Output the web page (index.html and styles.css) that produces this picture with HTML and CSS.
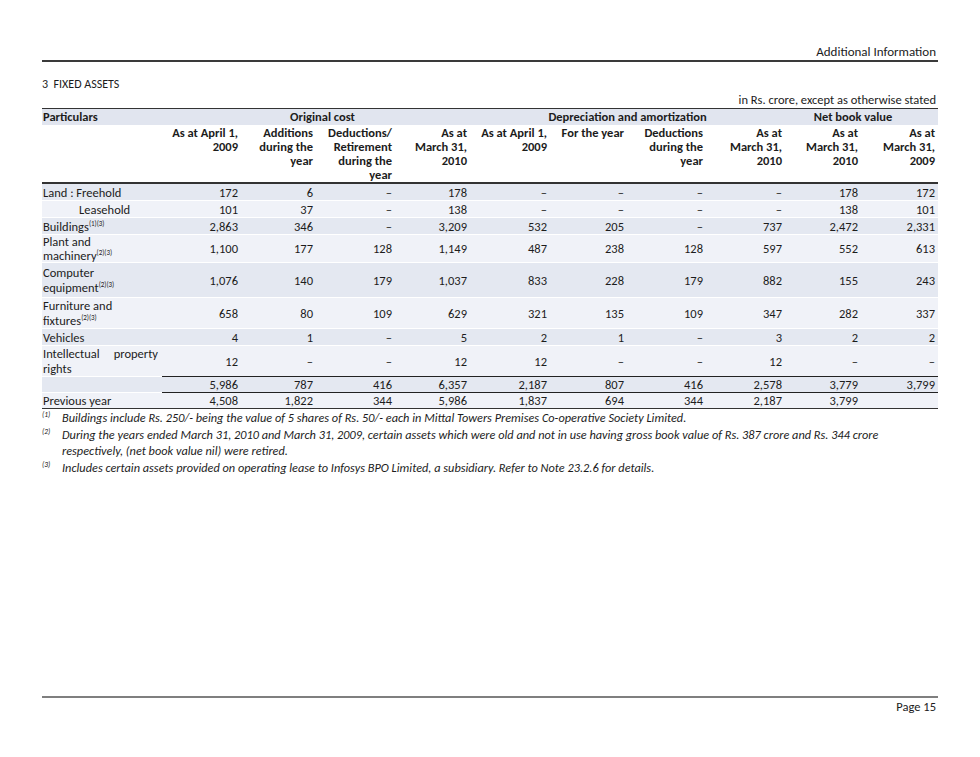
FILE: index.html
```
<!DOCTYPE html>
<html>
<head>
<meta charset="utf-8">
<link rel="stylesheet" href="styles.css">
</head>
<body>
<div class="page">
  <div class="running">Additional Information</div>
  <div class="sec">3&nbsp;&nbsp;FIXED ASSETS</div>
  <div class="unit">in Rs. crore, except as otherwise stated</div>
  <table class="fa">
    <colgroup>
      <col class="c-p"><col class="c-a"><col class="c-b"><col class="c-a"><col class="c-b"><col class="c-c"><col class="c-d"><col class="c-a"><col class="c-a"><col class="c-e"><col class="c-d">
    </colgroup>
    <thead>
      <tr class="h1">
        <th class="left">Particulars</th>
        <th colspan="4" class="grp g-oc">Original cost</th>
        <th colspan="4" class="grp">Depreciation and amortization</th>
        <th colspan="2" class="grp g-nb">Net book value</th>
      </tr>
      <tr class="h2">
        <th></th>
        <th>As at April 1,<br>2009</th>
        <th>Additions<br>during the<br>year</th>
        <th>Deductions/<br>Retirement<br>during the<br>year</th>
        <th>As at<br>March 31,<br>2010</th>
        <th>As at April 1,<br>2009</th>
        <th>For the year</th>
        <th>Deductions<br>during the<br>year</th>
        <th>As at<br>March 31,<br>2010</th>
        <th>As at<br>March 31,<br>2010</th>
        <th>As at<br>March 31,<br>2009</th>
      </tr>
    </thead>
    <tbody>
      <tr class="dk r1"><td class="left">Land : Freehold</td><td>172</td><td>6</td><td>–</td><td>178</td><td>–</td><td>–</td><td>–</td><td>–</td><td>178</td><td>172</td></tr>
      <tr class="lt r1"><td class="left ind">Leasehold</td><td>101</td><td>37</td><td>–</td><td>138</td><td>–</td><td>–</td><td>–</td><td>–</td><td>138</td><td>101</td></tr>
      <tr class="dk r1"><td class="left">Buildings<sup>(1)(3)</sup></td><td>2,863</td><td>346</td><td>–</td><td>3,209</td><td>532</td><td>205</td><td>–</td><td>737</td><td>2,472</td><td>2,331</td></tr>
      <tr class="lt r-plant"><td class="left two">Plant and<br>machinery<sup>(2)(3)</sup></td><td>1,100</td><td>177</td><td>128</td><td>1,149</td><td>487</td><td>238</td><td>128</td><td>597</td><td>552</td><td>613</td></tr>
      <tr class="dk r-comp"><td class="left two">Computer<br>equipment<sup>(2)(3)</sup></td><td>1,076</td><td>140</td><td>179</td><td>1,037</td><td>833</td><td>228</td><td>179</td><td>882</td><td>155</td><td>243</td></tr>
      <tr class="lt r-furn"><td class="left two">Furniture and<br>fixtures<sup>(2)(3)</sup></td><td>658</td><td>80</td><td>109</td><td>629</td><td>321</td><td>135</td><td>109</td><td>347</td><td>282</td><td>337</td></tr>
      <tr class="dk r1"><td class="left">Vehicles</td><td>4</td><td>1</td><td>–</td><td>5</td><td>2</td><td>1</td><td>–</td><td>3</td><td>2</td><td>2</td></tr>
      <tr class="lt r-ipr"><td class="left two just">Intellectual property rights</td><td>12</td><td>–</td><td>–</td><td>12</td><td>12</td><td>–</td><td>–</td><td>12</td><td>–</td><td>–</td></tr>
      <tr class="dk r2 tot"><td class="left"></td><td>5,986</td><td>787</td><td>416</td><td>6,357</td><td>2,187</td><td>807</td><td>416</td><td>2,578</td><td>3,779</td><td>3,799</td></tr>
      <tr class="lt r2 prev"><td class="left">Previous year</td><td>4,508</td><td>1,822</td><td>344</td><td>5,986</td><td>1,837</td><td>694</td><td>344</td><td>2,187</td><td>3,799</td><td></td></tr>
    </tbody>
  </table>
  <div class="notes">
    <div class="note"><span class="mark">(1)</span><span class="ntext">Buildings include Rs. 250/- being the value of 5 shares of Rs. 50/- each in Mittal Towers Premises Co-operative Society Limited.</span></div>
    <div class="note"><span class="mark">(2)</span><span class="ntext">During the years ended March 31, 2010 and March 31, 2009, certain assets which were old and not in use having gross book value of Rs. 387 crore and Rs. 344 crore respectively, (net book value nil) were retired.</span></div>
    <div class="note"><span class="mark">(3)</span><span class="ntext">Includes certain assets provided on operating lease to Infosys BPO Limited, a subsidiary. Refer to Note 23.2.6 for details.</span></div>
  </div>
  <div class="foot">Page 15</div>
</div>
</body>
</html>
```
FILE: styles.css
```
html, body { margin: 0; padding: 0; background: #fff; }
body {
  font-family: Carlito, Lato, "Liberation Sans", sans-serif;
  color: #1c1c1c;
}
.page {
  width: 896px;
  margin-left: 42px;
  padding-top: 44px;
}
.running {
  text-align: right;
  font-size: 13px;
  line-height: 16px;
  padding-right: 2px;
  border-bottom: 2px solid #3a3a3a;
}
.sec {
  margin-top: 14px;
  font-size: 12px;
  line-height: 16px;
}
.unit {
  text-align: right;
  font-size: 12.5px;
  line-height: 16px;
  padding-right: 2px;
}
.fa {
  width: 896px;
  border-collapse: collapse;
  table-layout: fixed;
  font-size: 12.5px;
}
.c-p { width: 120px; }
.c-a { width: 79px; }
.c-b { width: 75px; }
.c-c { width: 80px; }
.c-d { width: 77px; }
.c-e { width: 76px; }
.fa th, .fa td {
  padding: 0 3px 0 3px;
  text-align: right;
  white-space: nowrap;
}
.fa th { font-weight: bold; vertical-align: top; }
.fa .left { text-align: left; padding-left: 1px; }
.fa .h1 th {
  background: #e1e5ef;
  height: 16px;
  line-height: 16px;
  border-top: 1.5px solid #333;
}
.fa .h1 .grp { text-align: center; }
.fa .h1 .g-oc { padding-left: 16px; }
.fa .h1 .g-nb { padding-right: 20px; }
.fa .h2 th {
  height: 56px;
  line-height: 14px;
  padding-top: 1px;
  border-bottom: 2px solid #333;
}
.fa td {
  vertical-align: middle;
  line-height: 15px;
  border-top: 1px solid #fff;
}
.fa .dk td { background: #e4e8f1; }
.fa .lt td { background: #f0f2f8; }
.fa .r1 td { height: 16px; }
.fa .r2 td { height: 15px; }
.fa .r-plant td { height: 25px; }
.fa .r-plant td.two { line-height: 13.5px; }
.fa .r-comp td { height: 34px; }
.fa .r-furn td { height: 30px; }
.fa .r-ipr td { height: 29px; }
.fa td.two { line-height: 15px; white-space: normal; }
.fa td.ind { padding-left: 37px; }
.fa td.just { text-align: justify; text-align-last: left; padding-right: 4px; }
.fa .tot td { border-top: 1.5px solid #222; }
.fa .tot td.left { border-top: 1px solid #fff; }
.fa .prev td { border-top: 1.5px solid #222; border-bottom: 1.5px solid #333; }
.fa .prev td.left { border-top: 1px solid #fff; }
.fa sup {
  font-size: 7px;
  line-height: 0;
  vertical-align: 5px;
}
.notes {
  font-style: italic;
  font-size: 12.3px;
  line-height: 16px;
  padding-top: 1px;
}
.note {
  display: flex;
  margin-bottom: 1px;
}
.mark {
  flex: 0 0 20px;
  font-size: 7.5px;
  line-height: 10px;
}
.ntext { flex: 1; padding-right: 40px; }
.foot {
  margin-top: 220px;
  border-top: 2px solid #7f7f7f;
  text-align: right;
  font-size: 12.5px;
  line-height: 16px;
  padding-top: 1px;
  padding-right: 2px;
}
```
